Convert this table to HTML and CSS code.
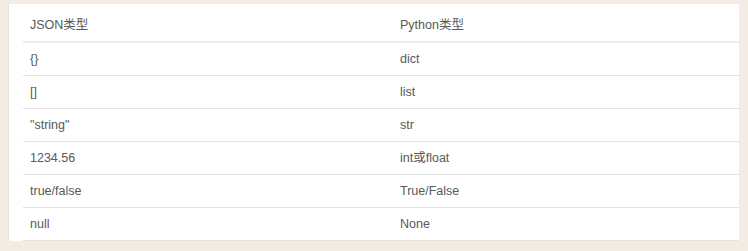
FILE: index.html
```html
<!DOCTYPE html>
<html lang="zh-CN">
<head>
    <meta charset="UTF-8">
    <meta name="viewport" content="width=device-width, initial-scale=1.0">
    <title>JSON与Python类型对照</title>
    <link rel="stylesheet" href="styles.css">
</head>
<body>

<div class="panel">
    <table class="type-table">
        <thead>
            <tr>
                <th class="col-json">JSON类型</th>
                <th>Python类型</th>
            </tr>
        </thead>
        <tbody>
            <tr><td>{}</td><td>dict</td></tr>
            <tr><td>[]</td><td>list</td></tr>
            <tr><td>"string"</td><td>str</td></tr>
            <tr><td>1234.56</td><td>int或float</td></tr>
            <tr><td>true/false</td><td>True/False</td></tr>
            <tr><td>null</td><td>None</td></tr>
        </tbody>
    </table>
</div>

</body>
</html>
```

FILE: styles.css
```css
body { margin: 0; padding: 4px 9px 0 8px; background-color: #f3ece2; font-family: "Liberation Sans", Arial, "Noto Sans CJK SC", sans-serif; }
.panel { background-color: #fff; padding: 4px 0 0 14px; border-left: 1px solid #e6e2dc; }
.type-table { width: 100%; border-collapse: collapse; font-size: 12.5px; color: #595959; }
.type-table th, .type-table td { text-align: left; font-weight: normal; padding: 8px 7px; line-height: 16px; border-bottom: 1px solid #e2e2e2; }
.type-table th { border-bottom: 2px solid #ececec; padding-top: 9px; padding-bottom: 8px; }
.type-table .col-json { width: 356px; }
```
